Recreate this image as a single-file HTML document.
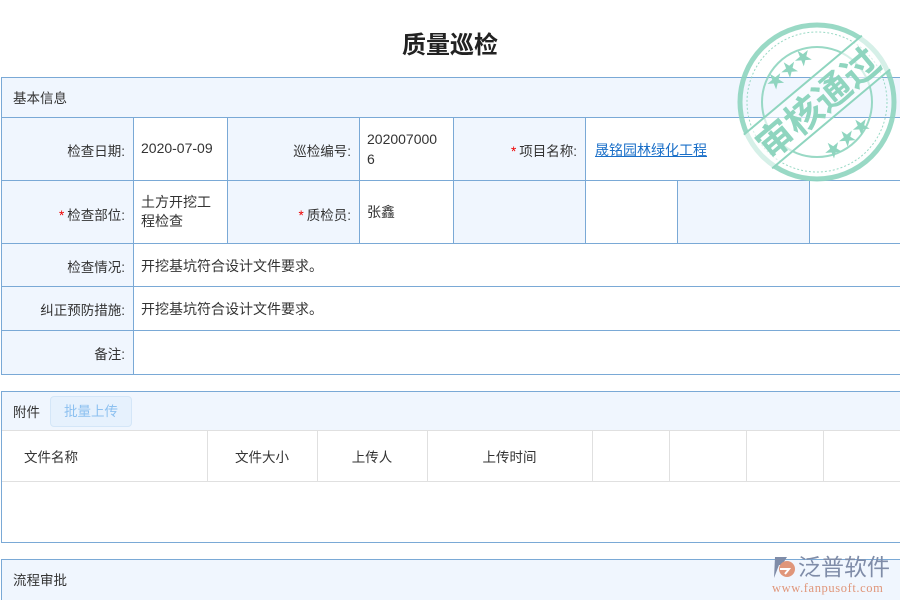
<!DOCTYPE html>
<html><head><meta charset="utf-8"><style>
*{margin:0;padding:0;box-sizing:border-box}
html,body{width:900px;height:600px;overflow:hidden}
body{background:#fff;font-family:"Liberation Sans","Noto Sans CJK SC",sans-serif;font-size:13px;color:#333;position:relative}
.a{position:absolute}
.c{position:absolute;border:1px solid #7aa9d6}
.lb{background:#f0f6fe;text-align:right;padding-right:8px;font-size:13.5px}
.v{font-size:14px}
.g{position:absolute;border-right:1px solid #e0e0e0;border-bottom:1px solid #e0e0e0;font-size:13.5px}
.r{color:#e00;margin-right:3px}
</style></head><body>
<div class="a" style="left:0;top:25px;width:900px;text-align:center;font-size:24px;font-weight:bold;color:#222">质量巡检</div>

<div class="c" style="left:1px;top:77px;width:905px;height:41px;background:#f0f6fe"></div>
<div class="a" style="left:13px;top:87px;font-size:13.5px">基本信息</div>

<div class="c lb" style="left:1px;top:117px;width:133px;height:64px;padding-top:22px">检查日期:</div>
<div class="c v" style="left:133px;top:117px;width:95px;height:64px;padding:22px 0 0 7px">2020-07-09</div>
<div class="c lb" style="left:227px;top:117px;width:133px;height:64px;padding-top:22px">巡检编号:</div>
<div class="c v" style="left:359px;top:117px;width:95px;height:64px;padding:11px 14px 0 7px;line-height:20px;word-break:break-all">2020070006</div>
<div class="c lb" style="left:453px;top:117px;width:133px;height:64px;padding-top:22px"><span class="r">*</span>项目名称:</div>
<div class="c v" style="left:585px;top:117px;width:330px;height:64px;padding:22px 0 0 9px;color:#1a6fc8;text-decoration:underline">晟铭园林绿化工程</div>

<div class="c lb" style="left:1px;top:180px;width:133px;height:64px;padding-top:23px"><span class="r">*</span>检查部位:</div>
<div class="c v" style="left:133px;top:180px;width:95px;height:64px;padding:12px 14px 0 7px;line-height:19px">土方开挖工程检查</div>
<div class="c lb" style="left:227px;top:180px;width:133px;height:64px;padding-top:23px"><span class="r">*</span>质检员:</div>
<div class="c v" style="left:359px;top:180px;width:95px;height:64px;padding:21px 0 0 7px">张鑫</div>
<div class="c lb" style="left:453px;top:180px;width:133px;height:64px"></div>
<div class="c" style="left:585px;top:180px;width:93px;height:64px"></div>
<div class="c lb" style="left:677px;top:180px;width:133px;height:64px"></div>
<div class="c" style="left:809px;top:180px;width:100px;height:64px"></div>

<div class="c lb" style="left:1px;top:243px;width:133px;height:44px;padding-top:12px">检查情况:</div>
<div class="c v" style="left:133px;top:243px;width:780px;height:44px;padding:12px 0 0 7px">开挖基坑符合设计文件要求。</div>
<div class="c lb" style="left:1px;top:286px;width:133px;height:45px;padding-top:12px">纠正预防措施:</div>
<div class="c v" style="left:133px;top:286px;width:780px;height:45px;padding:12px 0 0 7px">开挖基坑符合设计文件要求。</div>
<div class="c lb" style="left:1px;top:330px;width:133px;height:45px;padding-top:12px">备注:</div>
<div class="c" style="left:133px;top:330px;width:780px;height:45px"></div>

<div class="c" style="left:1px;top:391px;width:905px;height:152px"></div>
<div class="a" style="left:2px;top:392px;width:900px;height:39px;background:#f0f6fe;border-bottom:1px solid #e0e0e0"></div>
<div class="a" style="left:13px;top:401px;font-size:13.5px">附件</div>
<div class="a" style="left:50px;top:396px;width:82px;height:31px;border:1px solid #d4e6f8;border-radius:4px;background:#e6f1fd;color:#8cc0f0;text-align:center;line-height:29px;font-size:13.5px">批量上传</div>
<div class="g" style="left:2px;top:431px;width:206px;height:51px;padding:15px 0 0 22px">文件名称</div>
<div class="g" style="left:207px;top:431px;width:111px;height:51px;padding-top:15px;text-align:center">文件大小</div>
<div class="g" style="left:317px;top:431px;width:111px;height:51px;padding-top:15px;text-align:center">上传人</div>
<div class="g" style="left:427px;top:431px;width:166px;height:51px;padding-top:15px;text-align:center">上传时间</div>
<div class="g" style="left:592px;top:431px;width:78px;height:51px"></div>
<div class="g" style="left:669px;top:431px;width:78px;height:51px"></div>
<div class="g" style="left:746px;top:431px;width:78px;height:51px"></div>
<div class="g" style="left:823px;top:431px;width:78px;height:51px;border-right:none"></div>

<div class="c" style="left:1px;top:559px;width:905px;height:41px;border-bottom:none;background:#f0f6fe"></div>
<div class="a" style="left:13px;top:569px;font-size:13.5px">流程审批</div>

<svg class="a" style="left:735px;top:20px" width="166" height="166" viewBox="0 0 166 166">
<g fill="none" stroke="#8fd5bf" opacity="0.9">
<circle cx="82" cy="82" r="77" stroke-width="5"/>
<circle cx="82" cy="82" r="70" stroke-width="1" stroke-dasharray="2 2"/>
<circle cx="82" cy="82" r="55" stroke-width="2"/>
</g>
<g transform="rotate(-40 82 82)">
<rect x="2" y="60" width="160" height="44" fill="#fff" opacity="0.6"/>
<line x1="5" y1="60" x2="159" y2="60" stroke="#8fd5bf" stroke-width="2"/>
<line x1="5" y1="104" x2="159" y2="104" stroke="#8fd5bf" stroke-width="2"/>
<text x="82" y="97" text-anchor="middle" font-family="Noto Sans CJK SC,sans-serif" font-weight="bold" font-size="37" fill="#8fd5bf">审核通过</text>
<text x="82" y="45" text-anchor="middle" font-size="18" fill="#8fd5bf">★★★</text>
<text x="82" y="135" text-anchor="middle" font-size="18" fill="#8fd5bf">★★★</text>
</g>
</svg>

<svg class="a" style="left:770px;top:556px" width="28" height="24" viewBox="0 0 28 24">
<path d="M5 1h12l-5 8h-3l-5 13z" fill="#7f8ca8"/>
<circle cx="17" cy="13" r="8" fill="#e0967a"/>
<path d="M10 13h9l-4 5" fill="none" stroke="#fff" stroke-width="2"/>
</svg>
<div class="a" style="left:798px;top:553px;font-size:23px;color:#7f8ca8;line-height:28px">泛普软件</div>
<div class="a" style="left:772px;top:581px;font-family:'Liberation Serif',serif;font-size:12.5px;color:#e0967a;letter-spacing:0.6px">www.fanpusoft.com</div>
</body></html>
